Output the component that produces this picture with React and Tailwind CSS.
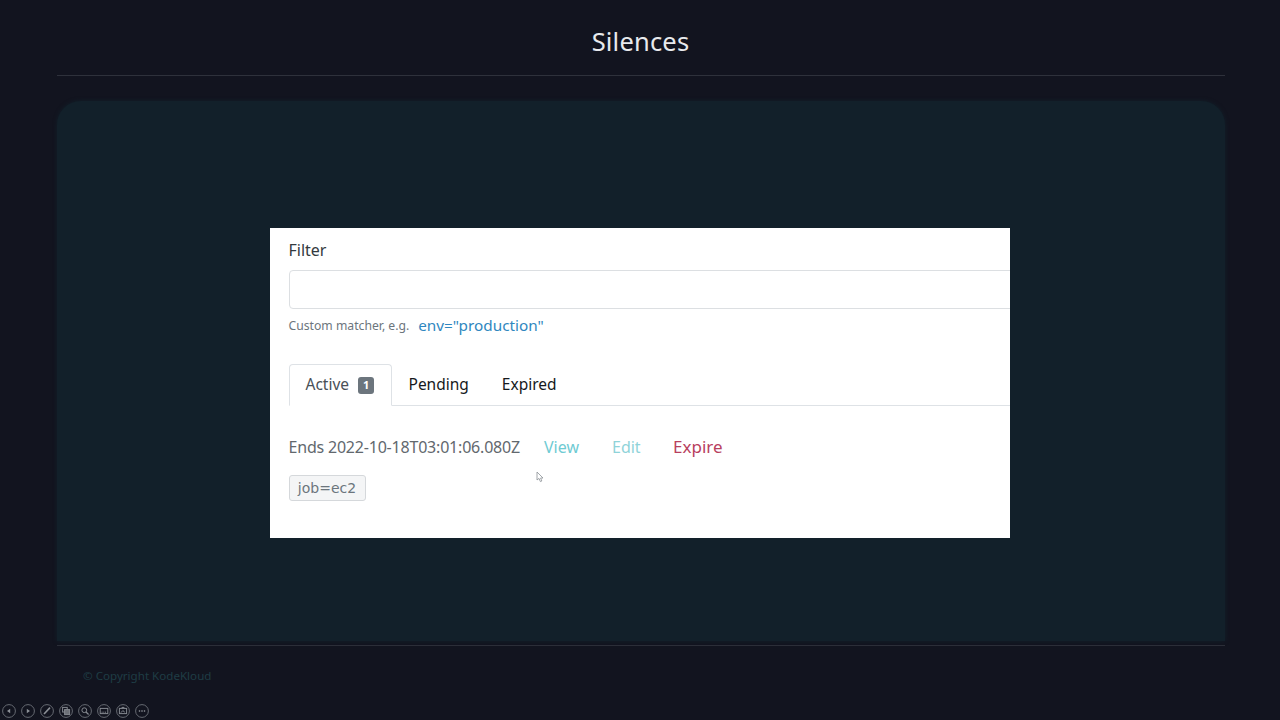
import React from 'react';

const ui = { fontFamily: '"Noto Sans", "Open Sans", sans-serif' };

function ToolButton({ children }) {
  return (
    <svg width="14" height="14" viewBox="0 0 14 14" fill="none" stroke="#84888f" strokeWidth="1">
      <circle cx="7" cy="7" r="6.4" stroke="#666a72" />
      {children}
    </svg>
  );
}

function SlideControls() {
  return (
    <div className="absolute left-[2px] top-[703.5px] flex gap-[5px]">
      <ToolButton><path d="M8.2 4.8v4.4L5 7z" fill="#8b8f96" stroke="none" /></ToolButton>
      <ToolButton><path d="M5.8 4.8v4.4L9 7z" fill="#8b8f96" stroke="none" /></ToolButton>
      <ToolButton><path d="M4 10l6-6.4" strokeWidth="1.6" stroke="#8b8f96" /></ToolButton>
      <ToolButton>
        <rect x="3.6" y="3.4" width="4.6" height="4.6" />
        <rect x="5.6" y="5.6" width="5" height="5" fill="#6d7178" />
      </ToolButton>
      <ToolButton>
        <circle cx="6.3" cy="6.2" r="2.4" />
        <path d="M8 8l2.6 2.4" strokeWidth="1.3" />
      </ToolButton>
      <ToolButton>
        <rect x="3.2" y="4.4" width="7.6" height="5.2" />
        <path d="M4.6 8.2h4.8" strokeDasharray="1 0.7" />
      </ToolButton>
      <ToolButton>
        <rect x="3.4" y="4.4" width="7.2" height="5.2" />
        <path d="M5 4.4l1-1h2l.8 1M5 8.6l1.8-2 2 1.6" />
      </ToolButton>
      <ToolButton>
        <circle cx="4.5" cy="7" r="0.8" fill="#9a9ea5" stroke="none" />
        <circle cx="7" cy="7" r="0.8" fill="#9a9ea5" stroke="none" />
        <circle cx="9.5" cy="7" r="0.8" fill="#9a9ea5" stroke="none" />
      </ToolButton>
    </div>
  );
}

function SilencesShot() {
  return (
    <div className="relative w-[740px] h-[310px] bg-white overflow-hidden pl-[18.5px]">
      <div className="text-[16px] leading-[22px] text-[#333a40] pt-[11px] h-[33px]">Filter</div>
      <div className="mt-[9px] h-[39px] w-[740px] border border-[#dcdfe2] rounded-[4px] bg-white"></div>
      <div className="mt-[7px] flex items-center h-[20px]">
        <span className="text-[12.2px] text-[#6c757d]">Custom matcher, e.g.</span>
        <span className="ml-[9px] text-[15.3px] leading-[20px] -mt-[3px] text-[#2f87c0]">env="production"</span>
      </div>
      <div className="mt-[28px] flex h-[42px] border-b border-[#dee2e6] text-[15.5px] -mr-[2px]">
        <div className="flex items-center h-[42px] w-[103px] pl-[16px] bg-white border border-[#dee2e6] border-b-white rounded-t-[4px] text-[#495057]">
          Active
          <span className="ml-[9px] flex items-center justify-center w-[16px] h-[17px] rounded-[3px] bg-[#6c757d] text-white text-[11px] font-bold">1</span>
        </div>
        <div className="flex items-center ml-[17px] text-[#16191c]">Pending</div>
        <div className="flex items-center ml-[33px] text-[#16191c]">Expired</div>
      </div>
      <div className="mt-[29px] flex items-center h-[24px] text-[16px]">
        <span className="text-[#62686e] w-[255.5px] whitespace-nowrap tracking-[-0.2px]">Ends 2022-10-18T03:01:06.080Z</span>
        <span className="text-[#6fcbd3] w-[68px]">View</span>
        <span className="text-[#8fd3d9] w-[61px]">Edit</span>
        <span className="text-[#b8405e] text-[17px]">Expire</span>
      </div>
      <div className="mt-[16px] flex items-center justify-center w-[77px] h-[26px] bg-[#f4f5f6] border border-[#d5d8db] rounded-[3px] text-[14px] text-[#6c757d]" style={{ fontFamily: '"DejaVu Sans", sans-serif' }}>
        job=ec2
      </div>
      {/* mouse pointer caught in the recording */}
      <svg className="absolute left-[266px] top-[243px]" width="9" height="12" viewBox="0 0 9 12" fill="#fff" stroke="#8a9096" strokeWidth="0.8">
        <path d="M1 1v8l2-1.6L4.4 10.6l1.4-.6L4.6 7H7z" />
      </svg>
    </div>
  );
}

export default function App() {
  return (
    <div className="relative w-[1280px] h-[720px] overflow-hidden bg-[#12141f] pl-[57px] pr-[55px]" style={ui}>
      <header className="h-[76px] border-b border-[#2e313b] flex items-center justify-center pt-[8px]">
        <h1 className="text-[25.5px] text-[#e8eaed] tracking-[0.2px] -ml-[1px]">Silences</h1>
      </header>
      <main className="mt-[25px] h-[540px] rounded-t-[24px] bg-[#12202a] shadow-[0_0_4px_#12202a] flex items-start justify-center pt-[127px] pr-[2px]">
        <SilencesShot />
      </main>
      <div className="mt-[4px] border-t border-[#2b2e38]"></div>
      <footer className="pl-[26px] pt-[21px] text-[11.6px] leading-[18px] text-[#1f3d45]">© Copyright KodeKloud</footer>
      <SlideControls />
    </div>
  );
}
